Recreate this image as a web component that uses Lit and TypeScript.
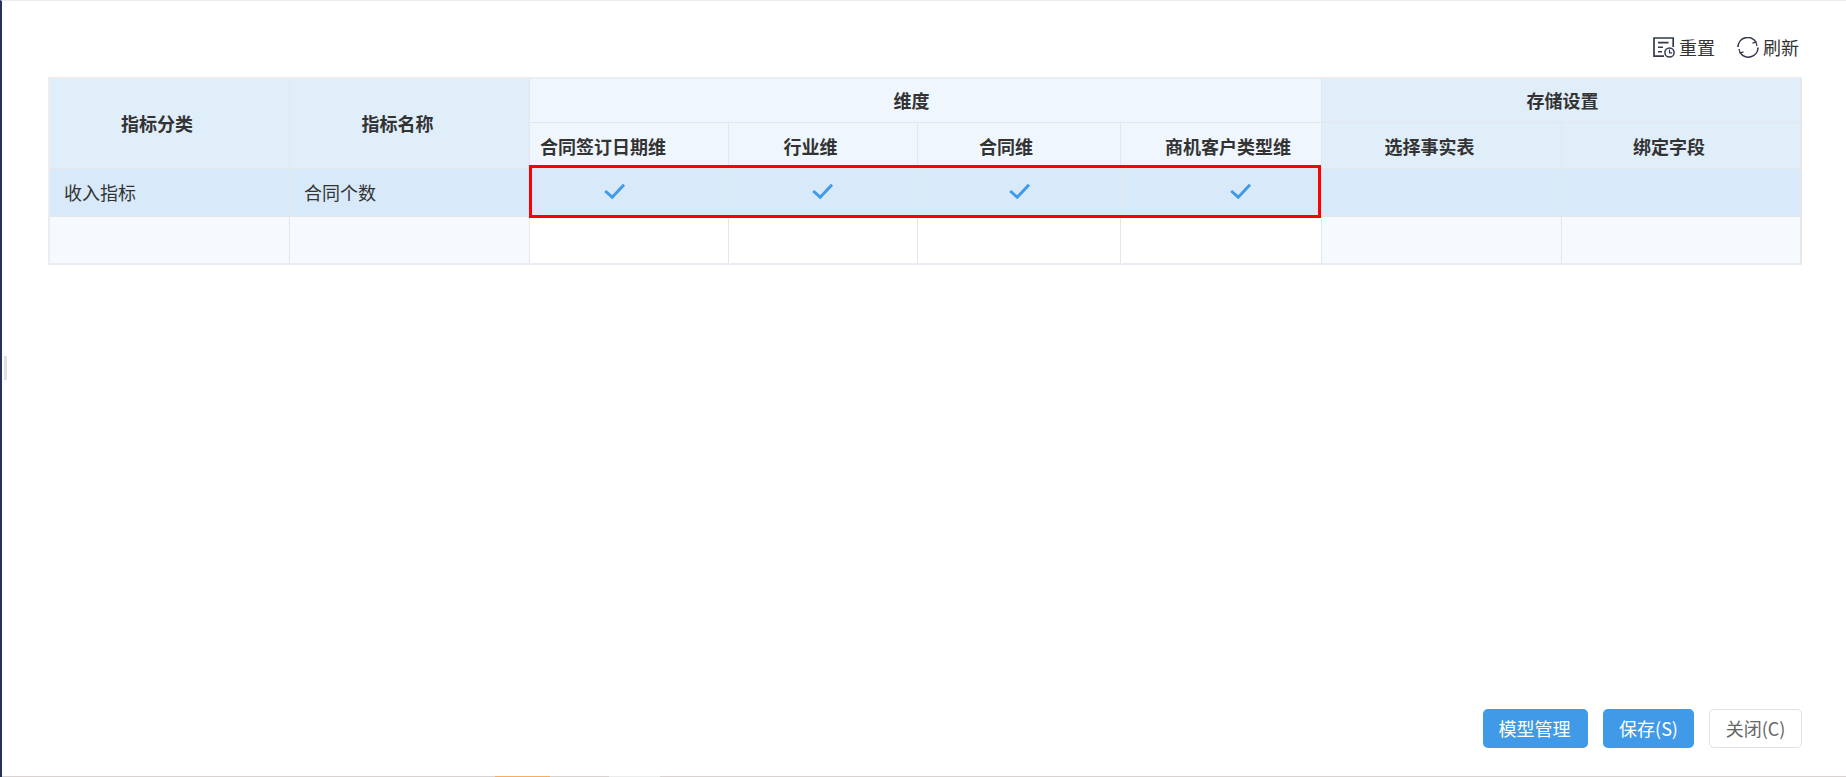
import { LitElement, html, css, svg } from "lit";
import { customElement } from "lit/decorators.js";

interface Cell { text: string; col: string; row: string; tone: string; pad?: string; }

const head: Cell[] = [
  { text: "指标分类", col: "1", row: "1 / 3", tone: "blue", pad: "0 25px 2px 0" },
  { text: "指标名称", col: "2", row: "1 / 3", tone: "blue", pad: "0 24px 2px 0" },
  { text: "维度", col: "3 / 7", row: "1", tone: "pale", pad: "0 28px 2px 0" },
  { text: "存储设置", col: "7 / 9", row: "1", tone: "blue", pad: "0 0 2px 3px" },
  { text: "合同签订日期维", col: "3", row: "2", tone: "pale", pad: "0 52px 0 0" },
  { text: "行业维", col: "4", row: "2", tone: "pale", pad: "0 25px 0 0" },
  { text: "合同维", col: "5", row: "2", tone: "pale", pad: "0 26px 0 0" },
  { text: "商机客户类型维", col: "6", row: "2", tone: "pale", pad: "0 0 0 14px" },
  { text: "选择事实表", col: "7", row: "2", tone: "blue", pad: "0 24px 0 0" },
  { text: "绑定字段", col: "8", row: "2", tone: "blue", pad: "0 24px 0 0" },
];

const checkPads = ["0 28px 3px 0", "0 1px 3px 0", "0 0 3px 1px", "0 0 3px 39px"];

const check = svg`<path d="M1.2 8l7 6.2L20 1.8" fill="none" stroke="#409ae8" stroke-width="3"/>`;

@customElement("app-root")
export class AppRoot extends LitElement {
  static styles = css`
    :host { display: block; font-family: "Noto Sans CJK SC", "Liberation Sans", sans-serif; color: #333; }
    * { box-sizing: border-box; }
    .page {
      height: 777px; display: flex; flex-direction: column;
      border-left: 2px solid #26315f; border-top: 1px solid #ececec; position: relative;
    }
    .handle { position: absolute; left: 2px; top: 355px; width: 3px; height: 24px; background: #e0e0e0; }
    .toolbar {
      height: 76px; display: flex; justify-content: flex-end; align-items: flex-start;
      padding: 35px 47px 0 0; gap: 22px; font-size: 18px; line-height: 22px;
    }
    .tool { display: flex; align-items: center; gap: 4px; color: #333; }
    .tool svg { display: block; }
    .table {
      margin-left: 46px; width: 1754px; display: grid;
      grid-template-columns: 240px 240px 199px 189px 203px 201px 240px 239px;
      grid-template-rows: 44px 46px 48px 46px;
      border: 2px solid #ecedf1; border-right: 1px solid #e6e8ec; border-bottom-color: #e9ecf3; font-size: 18px;
    }
    .cell {
      display: flex; align-items: center; justify-content: center;
      border-right: 1px solid #e4e6ea; border-bottom: 1px solid #e4e6ea;
    }
    .last { border-bottom: none; }
    .h { font-weight: 700; font-size: 18px; }
    .blue { background: #e0eefa; }
    .pale { background: #eff6fd; }
    .sel { background: #d8e9f9; }
    .side { background: #f5fafe; }
    .plain { background: #fff; }
    .left { justify-content: flex-start; padding: 0 0 2px 14px; }
    .mark {
      grid-column: 3 / 7; grid-row: 3; margin: -4px 1px -1px -1px;
      border: 3px solid #f00; z-index: 1; pointer-events: none;
    }
    .spacer { flex: 1; }
    .footer {
      display: flex; justify-content: flex-end; gap: 15px; padding: 0 44px 28px 0;
    }
    .btn {
      height: 39px; display: flex; align-items: center; justify-content: center;
      border-radius: 5px; font-size: 18px; background: #409ae8; color: #fff; padding-bottom: 2px;
    }
    .model { width: 105px; padding-right: 2px; }
    .save { width: 91px; }
    .close { width: 93px; background: #fff; color: #666; border: 1px solid #dfe1ea; }
    .strip { height: 1px; display: flex; background: #d8d2d2; }
    .strip i { display: block; }
    .gap { width: 493px; }
    .orange { width: 55px; background: #f6ad62; }
    .gap2 { width: 59px; }
    .light { width: 51px; background: #ececec; }
  `;

  private icons() {
    return {
      reset: html`<svg width="22" height="21" viewBox="0 0 22 21">
        <path d="M11 19.2H1V1H20.2V10" fill="none" stroke="#333a4d" stroke-width="1.7"/>
        <path d="M5 5.6H15.5M5 10.2H10M5 14.8H9" fill="none" stroke="#333a4d" stroke-width="1.6"/>
        <circle cx="16.5" cy="15.5" r="4.6" fill="#fff" stroke="#333a4d" stroke-width="1.5"/>
        <path d="M16.5 12.5v3.3h2.6" fill="none" stroke="#333a4d" stroke-width="1.2"/>
      </svg>`,
      refresh: html`<svg width="22" height="21" viewBox="0 0 22 21">
        <path d="M1 10A9.6 9.6 0 0 1 19 5.4" fill="none" stroke="#333a4d" stroke-width="1.6"/>
        <path d="M21 10.5A9.6 9.6 0 0 1 3.2 15.5" fill="none" stroke="#333a4d" stroke-width="1.6"/>
        <path d="M20 9l-1 -3.8l-3.6 1M2 12l1 3.8l3.6 -1" fill="none" stroke="#333a4d" stroke-width="1.2"/>
      </svg>`,
    };
  }

  render() {
    const ic = this.icons();
    return html`
      <div class="page">
        <div class="handle"></div>
        <div class="toolbar">
          <div class="tool">${ic.reset}<span>重置</span></div>
          <div class="tool">${ic.refresh}<span>刷新</span></div>
        </div>
        <div class="table">
          ${head.map(c => html`<div class="cell h ${c.tone}" style="grid-column:${c.col};grid-row:${c.row};padding:${c.pad ?? "0"}">${c.text}</div>`)}
          <div class="cell sel left" style="grid-column:1;grid-row:3">收入指标</div>
          <div class="cell sel left" style="grid-column:2;grid-row:3">合同个数</div>
          ${checkPads.map((p, i) => html`<div class="cell sel" style="grid-column:${i + 3};grid-row:3;padding:${p}">
            <svg width="22" height="16" viewBox="0 0 22 16">${check}</svg></div>`)}
          <div class="cell sel" style="grid-column:7;grid-row:3"></div>
          <div class="cell sel" style="grid-column:8;grid-row:3"></div>
          ${[1, 2, 3, 4, 5, 6, 7, 8].map(n => html`<div class="cell last ${n < 3 || n > 6 ? "side" : "plain"}" style="grid-column:${n};grid-row:4"></div>`)}
          <div class="mark"></div>
        </div>
        <div class="spacer"></div>
        <div class="footer">
          <div class="btn model">模型管理</div>
          <div class="btn save">保存(S)</div>
          <div class="btn close">关闭(C)</div>
        </div>
        <div class="strip"><i class="gap"></i><i class="orange"></i><i class="gap2"></i><i class="light"></i></div>
      </div>
    `;
  }
}
